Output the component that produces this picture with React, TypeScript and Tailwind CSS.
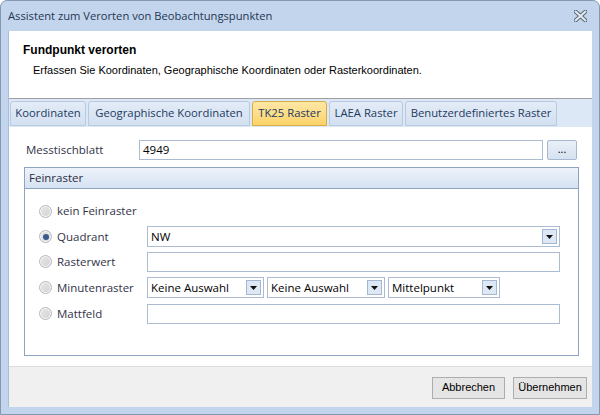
import React from "react";

const ui = { fontFamily: '"Open Sans", "Noto Sans", sans-serif' };
const arial = { fontFamily: '"Liberation Sans", Arial, sans-serif' };

function Radio({ checked }: { checked?: boolean }) {
  return (
    <div className="w-[13px] h-[13px] rounded-full border border-[#b3b9c2] bg-gradient-to-br from-[#e8e8e8] to-[#d2d2d2] flex items-center justify-center shadow-[inset_0_0_0_1px_#f6f6f6]">
      {checked && <div className="w-[6px] h-[6px] rounded-full bg-[#3b5a8c]" />}
    </div>
  );
}

function DropBtn() {
  return (
    <div className="w-[15px] h-[15px] border border-[#a3b7d3] bg-[#dee8f5] flex items-center justify-center">
      <svg width="7" height="4" viewBox="0 0 7 4">
        <path d="M0 0h7L3.5 4z" fill="#111" />
      </svg>
    </div>
  );
}

function Select({ value, w }: { value: string; w: string }) {
  return (
    <div className={`${w} h-[21px] border border-[#abbbd1] bg-white flex items-center justify-between pl-[3px] pr-[2px] text-[11.5px] text-black`}>
      <span>{value}</span>
      <DropBtn />
    </div>
  );
}

function Tab({ label, active, w }: { label: string; active?: boolean; w: string }) {
  return (
    <div
      className={`${w} h-[25px] rounded-t-[3px] border flex items-center justify-center text-[11.3px] text-[#1e3a5f] ${
        active
          ? "border-[#d9ad45] bg-gradient-to-b from-[#fde7a4] to-[#fcd36a]"
          : "border-[#b9cadf] bg-gradient-to-b from-[#e3ecf7] to-[#d3e0f1]"
      }`}
    >
      {label}
    </div>
  );
}

const lbl = "text-[11.5px] text-[#333348]";

export default function App() {
  return (
    <div className="w-[600px] h-[415px] bg-[#c3d5ec] border border-[#8598b2] rounded-t-[7px] flex flex-col px-[7px] pb-[7px]" style={ui}>
      {/* title bar */}
      <div className="h-[30px] flex items-center justify-between">
        <span className="text-[11.2px] text-[#1f3654] pt-[1px]">Assistent zum Verorten von Beobachtungspunkten</span>
        <svg width="13" height="12" viewBox="0 0 13 12" className="mr-[5px]">
          <path d="M1.5 1.5 L11.5 10.5 M11.5 1.5 L1.5 10.5" stroke="#5a6675" strokeWidth="4" strokeLinecap="round" />
          <path d="M1.5 1.5 L11.5 10.5 M11.5 1.5 L1.5 10.5" stroke="#e6ebf1" strokeWidth="2" strokeLinecap="round" />
        </svg>
      </div>

      {/* client */}
      <div className="flex-1 bg-white flex flex-col border-l border-[#a9bdd7]">
        {/* header */}
        <div className="h-[68px] border-b border-[#a0a0a0] pt-[12px] pl-[14px]" style={arial}>
          <div className="text-[12px] font-bold text-black leading-[15px]">Fundpunkt verorten</div>
          <div className="text-[11px] text-black leading-[14px] mt-[5px] pl-[10px]">
            Erfassen Sie Koordinaten, Geographische Koordinaten oder Rasterkoordinaten.
          </div>
        </div>

        {/* tab strip */}
        <div className="h-[28px] bg-[#dde8f6] flex items-start gap-[2px] pt-[2px] pl-[1px]">
          <Tab label="Koordinaten" w="w-[76px]" />
          <Tab label="Geographische Koordinaten" w="w-[162px]" />
          <Tab label="TK25 Raster" w="w-[75px]" active />
          <Tab label="LAEA Raster" w="w-[74px]" />
          <Tab label="Benutzerdefiniertes Raster" w="w-[152px]" />
        </div>

        {/* body */}
        <div className="flex-1 flex flex-col pl-[15px] pr-[15px] pt-[13px]">
          <div className="flex items-center h-[20px]">
            <span className={`w-[115px] pl-[2px] ${lbl}`}>Messtischblatt</span>
            <div className="w-[404px] h-[20px] border border-[#abbbd1] flex items-center pl-[3px] text-[11.5px] text-black">4949</div>
            <div className="ml-[4px] w-[30px] h-[20px] border border-[#a7b9d1] rounded-[2px] bg-gradient-to-b from-[#e9f0f8] to-[#d6e2f1] flex items-center justify-center text-[11px] text-black leading-none pb-[4px]">
              ...
            </div>
          </div>

          <div className="mt-[7px] w-[555px] h-[189px] border border-[#8fa4c2] flex flex-col">
            <div className="h-[21px] border-b border-[#8fa4c2] bg-gradient-to-b from-[#eef3fa] to-[#d5e2f3] flex items-center pl-[4px] text-[11.5px] text-[#2b2b40]">
              Feinraster
            </div>
            <div className="flex flex-col pl-[14px] pt-[12px]">
              <div className="flex items-center h-[20px]">
                <Radio />
                <span className={`ml-[5px] ${lbl}`}>kein Feinraster</span>
              </div>
              <div className="flex items-center h-[21px] mt-[5px]">
                <Radio checked />
                <span className={`ml-[5px] w-[90px] ${lbl}`}>Quadrant</span>
                <Select value="NW" w="w-[413px]" />
              </div>
              <div className="flex items-center h-[21px] mt-[4px]">
                <Radio />
                <span className={`ml-[5px] w-[90px] ${lbl}`}>Rasterwert</span>
                <div className="w-[413px] h-[20px] border border-[#abbbd1]" />
              </div>
              <div className="flex items-center h-[21px] mt-[5px]">
                <Radio />
                <span className={`ml-[5px] w-[90px] ${lbl}`}>Minutenraster</span>
                <Select value="Keine Auswahl" w="w-[117px]" />
                <div className="ml-[3px]">
                  <Select value="Keine Auswahl" w="w-[118px]" />
                </div>
                <div className="ml-[3px]">
                  <Select value="Mittelpunkt" w="w-[112px]" />
                </div>
              </div>
              <div className="flex items-center h-[21px] mt-[5px]">
                <Radio />
                <span className={`ml-[5px] w-[90px] ${lbl}`}>Mattfeld</span>
                <div className="w-[413px] h-[20px] border border-[#abbbd1]" />
              </div>
            </div>
          </div>
        </div>

        {/* footer */}
        <div className="h-[41px] border-t border-[#dcdcdc] bg-[#f0f0f0] flex items-center justify-end gap-[8px] pr-[5px] pt-[1px]" style={arial}>
          <div className="w-[73px] h-[22px] border border-[#adadad] bg-[#e5e5e5] flex items-center justify-center text-[11px] text-black">Abbrechen</div>
          <div className="w-[74px] h-[22px] border border-[#adadad] bg-[#e5e5e5] flex items-center justify-center text-[11px] text-black">Übernehmen</div>
        </div>
      </div>
    </div>
  );
}
